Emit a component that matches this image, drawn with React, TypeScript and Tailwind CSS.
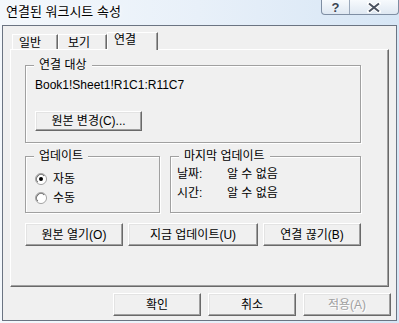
import React from 'react';

const FONT = { fontFamily: '"Liberation Sans", "Noto Sans CJK KR", sans-serif' };

function Button({ className = '', disabled = false, children }: { className?: string; disabled?: boolean; children: React.ReactNode }) {
  return (
    <div
      className={`flex items-center justify-center bg-[#f0f0f0] border border-t-white border-l-white border-r-[#696969] border-b-[#696969] shadow-[inset_-1px_-1px_0_#a0a0a0,inset_1px_1px_0_#e3e3e3] text-[12px] leading-[14px] ${
        disabled ? 'text-[#a0a0a0] [text-shadow:1px_1px_0_#fff]' : 'text-black'
      } ${className}`}
    >
      {children}
    </div>
  );
}

function Radio({ checked }: { checked?: boolean }) {
  return (
    <svg width="12" height="12" viewBox="0 0 12 12">
      <circle cx="6" cy="6" r="5.5" fill="#fff" stroke="#a0a0a0" />
      <circle cx="6" cy="6" r="4.5" fill="#fff" stroke="#696969" strokeDasharray="14 14" transform="rotate(135 6 6)" />
      {checked && <circle cx="6" cy="6" r="2" fill="#000" />}
    </svg>
  );
}

function Group({ label, className = '', children }: { label: string; className?: string; children: React.ReactNode }) {
  return (
    <div className={`relative border border-[#a0a0a0] shadow-[inset_1px_1px_0_#fff,1px_1px_0_#fff] ${className}`}>
      <span className="absolute -top-[8px] left-[8px] px-[5px] bg-[#f0f0f0] leading-[14px]">{label}</span>
      {children}
    </div>
  );
}

export default function App() {
  return (
    <div
      className="w-[399px] h-[323px] overflow-hidden bg-gradient-to-r from-[#f4f8fc] via-[#e8f0f9] to-[#d7e6f5] text-[12px] text-black"
      style={FONT}
    >
      {/* title bar */}
      <div className="h-[25px] flex items-start">
        <div className="flex-1 pl-[6px] pt-[4px] text-[13px] leading-[15px] [text-shadow:0_0_6px_#fff,0_0_3px_#fff]">
          연결된 워크시트 속성
        </div>
        <div className="flex h-[15px] rounded-b-[4px] border border-t-0 border-[#7f8ea3] bg-gradient-to-b from-[#f7fafd] to-[#dfe8f2] overflow-hidden">
          <div className="w-[28px] flex items-center justify-center border-r border-[#9aa8ba] font-bold text-[13px] leading-[13px] text-[#3c4552] [text-shadow:0_0_2px_#fff]">
            ?
          </div>
          <div className="w-[48px] flex items-center justify-center">
            <svg width="14" height="11" viewBox="0 0 14 11">
              <path d="M2 1.5 L12 9.5 M12 1.5 L2 9.5" stroke="#ffffff" strokeWidth="4" strokeLinecap="round" />
              <path d="M2 1.5 L12 9.5 M12 1.5 L2 9.5" stroke="#4a5260" strokeWidth="2" />
            </svg>
          </div>
        </div>
      </div>

      {/* client area */}
      <div className="ml-[2px] w-[395px] h-[296px] border border-[#6b7482] bg-[#f0f0f0] pl-[7px] pt-[6px]">
        {/* tabs */}
        <div className="flex items-end h-[17px]">
          <div className="ml-[2px] w-[46px] h-[15px] pl-[6px] pt-[1px] leading-[14px] border-l border-t border-l-white border-t-white border-r border-r-[#696969] shadow-[inset_-1px_0_0_#a0a0a0]">
            일반
          </div>
          <div className="w-[49px] h-[15px] pl-[9px] pt-[1px] leading-[14px] border-l border-t border-l-white border-t-white border-r border-r-[#696969] shadow-[inset_-1px_0_0_#a0a0a0]">
            보기
          </div>
          <div className="relative z-10 -mb-[1px] w-[51px] h-[18px] pl-[6px] leading-[14px] bg-[#f0f0f0] border-l border-t border-l-white border-t-white border-r border-r-[#696969] shadow-[inset_-1px_0_0_#a0a0a0]">
            연결
          </div>
        </div>

        {/* panel */}
        <div className="w-[379px] h-[238px] border border-t-white border-l-white border-r-[#696969] border-b-[#696969] shadow-[inset_-1px_-1px_0_#a0a0a0] pl-[14px]">
          <Group label="연결 대상" className="mt-[15px] w-[336px] h-[78px] pl-[9px] pt-[12px]">
            <div className="leading-[14px]">Book1!Sheet1!R1C1:R11C7</div>
            <Button className="mt-[19px] w-[107px] h-[20px]">원본 변경(C)...</Button>
          </Group>

          <div className="flex gap-[10px] mt-[13px]">
            <Group label="업데이트" className="w-[135px] h-[57px] pl-[9px] pt-[14px]">
              <div className="flex flex-col gap-[3px]">
                <div className="flex items-center h-[16px] gap-[6px]">
                  <Radio checked />
                  <span className="leading-[14px]">자동</span>
                </div>
                <div className="flex items-center h-[16px] gap-[6px]">
                  <Radio />
                  <span className="leading-[14px]">수동</span>
                </div>
              </div>
            </Group>
            <Group label="마지막 업데이트" className="w-[191px] h-[57px] pl-[6px] pt-[9px]">
              <div className="flex flex-col gap-[3px]">
                <div className="flex items-center h-[16px]">
                  <span className="w-[50px] leading-[14px]">날짜:</span>
                  <span className="leading-[14px]">알 수 없음</span>
                </div>
                <div className="flex items-center h-[16px]">
                  <span className="w-[50px] leading-[14px]">시간:</span>
                  <span className="leading-[14px]">알 수 없음</span>
                </div>
              </div>
            </Group>
          </div>

          <div className="flex gap-[5px] mt-[10px]">
            <Button className="w-[98px] h-[23px]">원본 열기(O)</Button>
            <Button className="w-[130px] h-[23px]">지금 업데이트(U)</Button>
            <Button className="w-[98px] h-[23px]">연결 끊기(B)</Button>
          </div>
        </div>

        {/* dialog buttons */}
        <div className="flex justify-end gap-[7px] pr-[5px] mt-[6px]">
          <Button className="w-[88px] h-[23px]">확인</Button>
          <Button className="w-[88px] h-[23px]">취소</Button>
          <Button className="w-[88px] h-[23px]" disabled>
            적용(A)
          </Button>
        </div>
      </div>
    </div>
  );
}
